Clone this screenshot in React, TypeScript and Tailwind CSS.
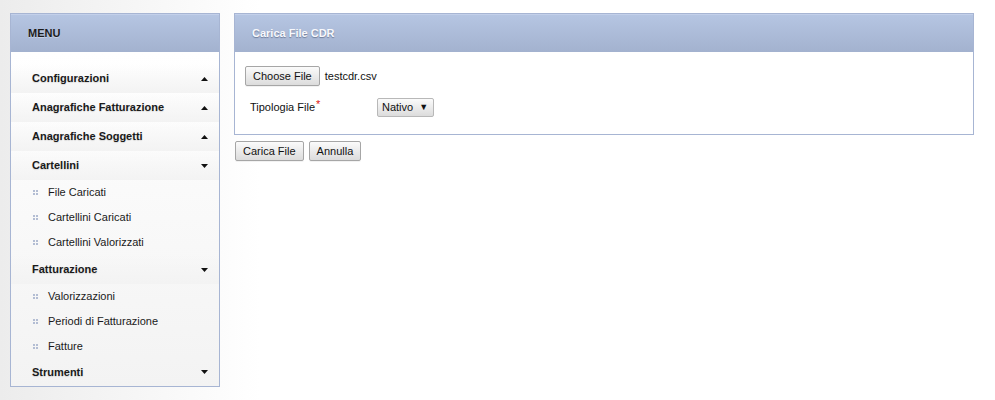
import React from "react";

type Item = { label: string; open?: boolean; children?: string[] };

const menu: Item[] = [
  { label: "Configurazioni" },
  { label: "Anagrafiche Fatturazione" },
  { label: "Anagrafiche Soggetti" },
  {
    label: "Cartellini",
    open: true,
    children: ["File Caricati", "Cartellini Caricati", "Cartellini Valorizzati"],
  },
  {
    label: "Fatturazione",
    open: true,
    children: ["Valorizzazioni", "Periodi di Fatturazione", "Fatture"],
  },
  { label: "Strumenti", open: true },
];

function Arrow({ down }: { down?: boolean }) {
  return (
    <svg width="7" height="4" viewBox="0 0 7 4" className="block">
      {down ? <path d="M0 0h7L3.5 4z" fill="#111" /> : <path d="M0 4h7L3.5 0z" fill="#111" />}
    </svg>
  );
}

function Dots() {
  return (
    <svg width="5" height="5" viewBox="0 0 5 5" className="block">
      <rect x="0" y="0" width="2" height="2" fill="#b3bdd3" />
      <rect x="3" y="0" width="2" height="2" fill="#b3bdd3" />
      <rect x="0" y="3" width="2" height="2" fill="#b3bdd3" />
      <rect x="3" y="3" width="2" height="2" fill="#b3bdd3" />
    </svg>
  );
}

function PanelHeader({ title, light }: { title: string; light?: boolean }) {
  return (
    <div
      className={
        "flex h-[38px] items-center border-t border-[#c3d0ea] bg-gradient-to-b from-[#b5c5e2] to-[#a3b2cf] pl-[17px] text-[11px] font-bold " +
        (light
          ? "text-[#f7f8fc] [text-shadow:0_1px_1px_rgba(40,50,80,0.45)]"
          : "text-[#1c1c1c] [text-shadow:0_1px_0_rgba(255,255,255,0.35)]")
      }
    >
      {title}
    </div>
  );
}

function Btn({ children, className = "" }: { children: React.ReactNode; className?: string }) {
  return (
    <button
      type="button"
      className={
        "h-5 rounded-[2px] border border-[#a6a6a6] bg-gradient-to-b from-[#fbfbfb] to-[#dcdcdc] px-[7px] text-[11px] leading-none text-[#111] shadow-[0_1px_0_rgba(0,0,0,0.05)] " +
        className
      }
    >
      {children}
    </button>
  );
}

export default function App() {
  return (
    <div className="min-h-[400px] w-full bg-[linear-gradient(to_right,#ececec,#ffffff_260px)] font-['Liberation_Sans',Arial,sans-serif]">
      <div className="flex items-start gap-[14px] pl-[10px] pt-[13px]">
        {/* menu */}
        <aside className="w-[210px] border border-t-0 border-[#a7b5d3] bg-[#f9f9f9]">
          <div className="border-t border-[#a7b5d3]">
            <PanelHeader title="MENU" />
          </div>
          <nav className="bg-gradient-to-b from-white to-[#f3f3f3] pt-[12px]">
            {menu.map((s, i) => (
              <div key={s.label}>
                <div
                  className={
                    "flex items-center justify-between bg-gradient-to-b from-transparent to-[#f3f3f3] pl-[21px] pr-[11px] text-[11px] font-bold text-[#1a1a1a] [text-shadow:0_1px_1px_rgba(0,0,0,0.12)] " +
                    (i === menu.length - 1 ? "h-[27px] pb-[1px]" : "h-[29px]")
                  }
                >
                  <span>{s.label}</span>
                  <Arrow down={s.open} />
                </div>
                {s.children?.map((c) => (
                  <div key={c} className="flex h-[25px] items-center pl-[22px] text-[11px] text-[#1a1a1a]">
                    <Dots />
                    <span className="ml-[10px]">{c}</span>
                  </div>
                ))}
              </div>
            ))}
          </nav>
        </aside>

        {/* content */}
        <main className="w-[740px]">
          <section className="border border-t-0 border-[#a7b5d3] bg-white">
            <div className="border-t border-[#a7b5d3]">
              <PanelHeader title="Carica File CDR" light />
            </div>
            <div className="pb-[17px] pl-[10px] pt-[14px]">
              <div className="flex items-center">
                <Btn>Choose File</Btn>
                <span className="ml-[5px] text-[11px] text-[#111]">testcdr.csv</span>
              </div>
              <div className="mt-[12px] flex items-center">
                <span className="ml-[5px] flex w-[127px] items-start text-[11px] text-[#111]">
                  Tipologia File
                  <span className="ml-[1px] mt-[1px] text-[11px] leading-[9px] text-[#e01010]">*</span>
                </span>
                <button
                  type="button"
                  className="flex h-[19px] w-[57px] items-center rounded-[2px] border border-[#b8b8b8] bg-gradient-to-b from-[#fbfbfb] to-[#dcdcdc] pl-[4px] text-[11px] text-[#111]"
                >
                  Nativo
                  <span className="ml-[6px] text-[9px]">▼</span>
                </button>
              </div>
            </div>
          </section>
          <div className="mt-[6px] flex gap-[5px] pl-[1px]">
            <Btn>Carica File</Btn>
            <Btn>Annulla</Btn>
          </div>
        </main>
      </div>
    </div>
  );
}
